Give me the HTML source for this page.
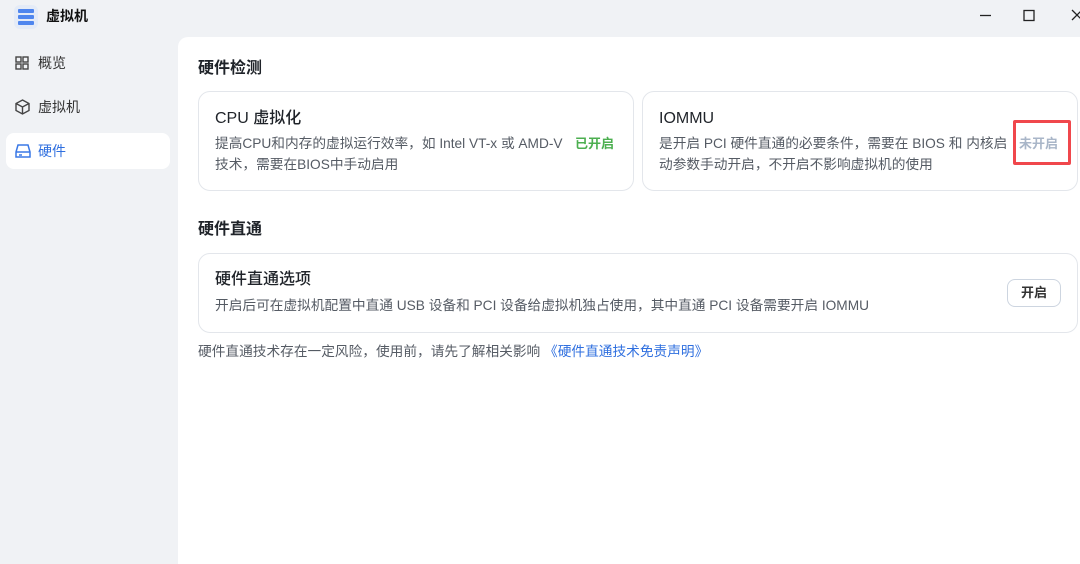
<!DOCTYPE html>
<html><head><meta charset="utf-8"><style>
*{margin:0;padding:0;box-sizing:border-box}
body{width:1080px;height:564px;overflow:hidden;background:#f0f2f5;font-family:"Liberation Sans","Noto Sans CJK SC",sans-serif;color:#1f2329;position:relative}
.abs{position:absolute}
.title{left:46px;top:6px;font-size:14px;font-weight:bold;color:#111}
.nav{left:6px;width:164px;height:36px;border-radius:8px;font-size:14px;color:#333;display:flex;align-items:center;padding-left:32px}
.nav svg{position:absolute;left:9px;top:11px}
.main{left:178px;top:37px;width:902px;height:527px;background:#fff;border-top-left-radius:10px}
.h{font-size:16px;font-weight:bold;color:#1f2329}
.card{border:1px solid #e3e6eb;border-radius:12px;background:#fff}
.ct{font-size:16px;font-weight:500;color:#1f2329;line-height:20px}
.cd{font-size:13.7px;color:#555b64;line-height:21px;white-space:nowrap}
</style></head><body>
<div class="abs" style="left:14px;top:5px;width:24px;height:24px;border-radius:6px;background:#e4ebf7"></div>
<div class="abs" style="left:18px;top:9px;width:16px;height:4px;background:#4f86ee;border-radius:1px"></div>
<div class="abs" style="left:18px;top:15px;width:16px;height:4px;background:#4f86ee;border-radius:1px"></div>
<div class="abs" style="left:18px;top:21px;width:16px;height:4px;background:#4f86ee;border-radius:1px"></div>
<div class="abs title">虚拟机</div>
<svg class="abs" style="left:975px;top:8px" width="105" height="16"><path d="M5 7.5h11" stroke="#222" stroke-width="1.3"/><rect x="49" y="2.5" width="10" height="10" fill="none" stroke="#222" stroke-width="1.3"/><path d="M97 2l10 10M107 2L97 12" stroke="#222" stroke-width="1.3"/></svg>
<div class="abs nav" style="top:45px"><svg width="14" height="14" fill="none" stroke="#444" stroke-width="1.4"><rect x="1" y="1" width="5" height="5"/><rect x="8" y="1" width="5" height="5"/><rect x="1" y="8" width="5" height="5"/><rect x="8" y="8" width="5" height="5"/></svg>概览</div>
<div class="abs nav" style="top:89px"><svg width="15" height="16" fill="none" stroke="#444" stroke-width="1.4" style="top:10px"><path d="M7.5 1L14 4.5v7L7.5 15 1 11.5v-7zM1 4.5l6.5 3.5 6.5-3.5M7.5 8v7"/></svg>虚拟机</div>
<div class="abs nav" style="top:133px;background:#fff;color:#2f6fdf"><svg width="16" height="14" fill="none" stroke="#3a78e6" stroke-width="1.5"><path d="M3 1h10l2 7v5H1V8zM1 8h14"/><path d="M4 11h3"/></svg>硬件</div>
<div class="abs main"></div>
<div class="abs h" style="left:198px;top:54px">硬件检测</div>
<div class="abs card" style="left:198px;top:91px;width:436px;height:100px"></div>
<div class="abs ct" style="left:215px;top:109px">CPU 虚拟化</div>
<div class="abs cd" style="left:215px;top:133px">提高CPU和内存的虚拟运行效率，如 Intel VT-x 或 AMD-V<br>技术，需要在BIOS中手动启用</div>
<div class="abs" style="left:575px;top:133px;font-size:13px;font-weight:bold;color:#4caf50">已开启</div>
<div class="abs card" style="left:642px;top:91px;width:436px;height:100px"></div>
<div class="abs ct" style="left:659px;top:109px">IOMMU</div>
<div class="abs cd" style="left:659px;top:133px">是开启 PCI 硬件直通的必要条件，需要在 BIOS 和 内核启<br>动参数手动开启，不开启不影响虚拟机的使用</div>
<div class="abs" style="left:1013px;top:120px;width:58px;height:45px;border:3px solid #f0474c;border-radius:2px"></div>
<div class="abs" style="left:1019px;top:133px;font-size:13px;font-weight:bold;color:#a9b6c8">未开启</div>
<div class="abs h" style="left:198px;top:215px">硬件直通</div>
<div class="abs card" style="left:198px;top:253px;width:880px;height:80px"></div>
<div class="abs ct" style="left:215px;top:270px">硬件直通选项</div>
<div class="abs cd" style="left:215px;top:295px">开启后可在虚拟机配置中直通 USB 设备和 PCI 设备给虚拟机独占使用，其中直通 PCI 设备需要开启 IOMMU</div>
<div class="abs" style="left:1007px;top:279px;width:54px;height:28px;border:1px solid #cdd5e0;border-radius:8px;font-size:13px;font-weight:bold;color:#333;text-align:center;line-height:26px">开启</div>
<div class="abs cd" style="left:198px;top:341px">硬件直通技术存在一定风险，使用前，请先了解相关影响 <span style="color:#2f6fdf">《硬件直通技术免责声明》</span></div>
</body></html>
